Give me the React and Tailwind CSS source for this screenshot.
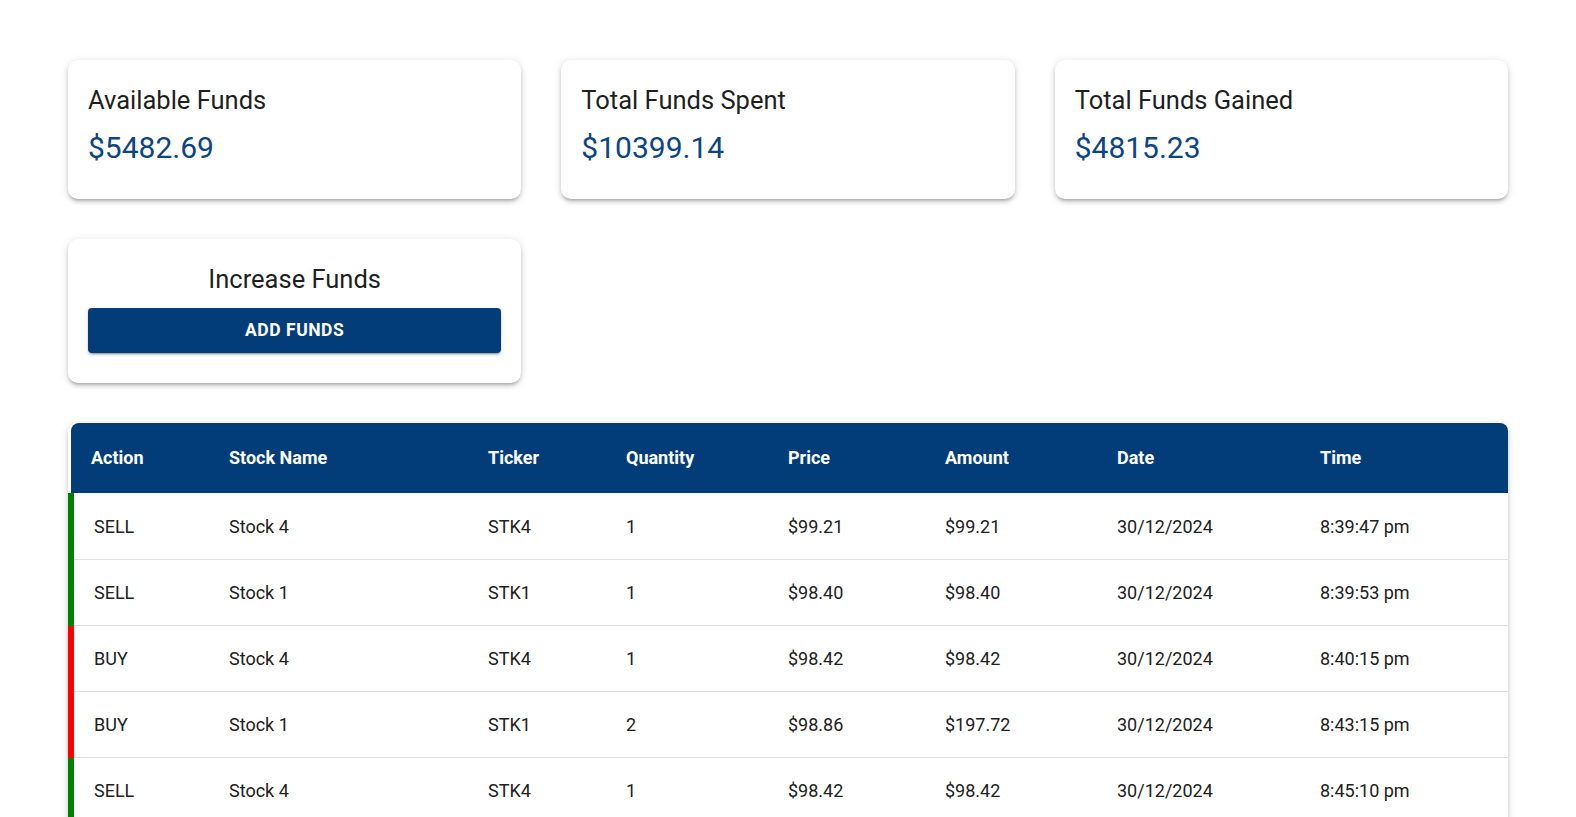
import React from 'react';

const PRIMARY = 'bg-[#023d7a]';

const summary = [
  { label: 'Available Funds', value: '$5482.69' },
  { label: 'Total Funds Spent', value: '$10399.14' },
  { label: 'Total Funds Gained', value: '$4815.23' },
];

const columns = [
  { title: 'Action', width: 'w-[138px]' },
  { title: 'Stock Name', width: 'w-[259px]' },
  { title: 'Ticker', width: 'w-[138px]' },
  { title: 'Quantity', width: 'w-[162px]' },
  { title: 'Price', width: 'w-[157px]' },
  { title: 'Amount', width: 'w-[172px]' },
  { title: 'Date', width: 'w-[203px]' },
  { title: 'Time', width: 'w-[208px]' },
];

const transactions = [
  { action: 'SELL', name: 'Stock 4', ticker: 'STK4', qty: 1, price: '$99.21', amount: '$99.21', date: '30/12/2024', time: '8:39:47 pm' },
  { action: 'SELL', name: 'Stock 1', ticker: 'STK1', qty: 1, price: '$98.40', amount: '$98.40', date: '30/12/2024', time: '8:39:53 pm' },
  { action: 'BUY', name: 'Stock 4', ticker: 'STK4', qty: 1, price: '$98.42', amount: '$98.42', date: '30/12/2024', time: '8:40:15 pm' },
  { action: 'BUY', name: 'Stock 1', ticker: 'STK1', qty: 2, price: '$98.86', amount: '$197.72', date: '30/12/2024', time: '8:43:15 pm' },
  { action: 'SELL', name: 'Stock 4', ticker: 'STK4', qty: 1, price: '$98.42', amount: '$98.42', date: '30/12/2024', time: '8:45:10 pm' },
];

const cardShadow =
  'shadow-[0_3px_3px_-2px_rgba(0,0,0,0.2),0_3px_4px_0_rgba(0,0,0,0.14),0_1px_8px_0_rgba(0,0,0,0.12)]';

const SummaryCard = ({ label, value }) => (
  <div className={`h-[139px] rounded-[10px] bg-white px-5 pt-6 ${cardShadow}`}>
    <div className="text-[25.5px] leading-8 text-[#1f1f1f]">{label}</div>
    <div className="mt-[14px] text-[30px] leading-9 text-[#0b4584]">{value}</div>
  </div>
);

export default function App() {
  return (
    <div className="min-h-screen bg-white font-['Roboto','Liberation_Sans',sans-serif]">
      {/* faint app bar shadow at the very top */}
      <div className="h-0 shadow-[0_1px_3px_rgba(0,0,0,0.08)]" />

      <div className="flex flex-col gap-10 px-[68px] pt-[60px] pb-10">
        <div className="grid grid-cols-3 gap-10">
          {summary.map((item) => (
            <SummaryCard key={item.label} {...item} />
          ))}
        </div>

        <div className="grid grid-cols-3 gap-10">
          <div className={`flex h-[144px] flex-col rounded-[10px] bg-white px-5 pt-6 ${cardShadow}`}>
            <div className="text-center text-[25.5px] leading-8 text-[#1f1f1f]">Increase Funds</div>
            <button
              className={`mt-[13px] h-[45px] w-full rounded ${PRIMARY} text-[17.5px] font-bold uppercase tracking-[0.03em] text-white shadow-[0_3px_1px_-2px_rgba(0,0,0,0.2),0_2px_2px_0_rgba(0,0,0,0.14),0_1px_5px_0_rgba(0,0,0,0.12)]`}
            >
              Add Funds
            </button>
          </div>
        </div>

        <div className={`rounded-lg bg-white ${cardShadow}`}>
          <table className="w-full table-fixed border-collapse text-left text-lg">
            <colgroup>
              {columns.map((col) => (
                <col key={col.title} className={col.width} />
              ))}
            </colgroup>
            <thead>
              <tr className={`h-[70px] ${PRIMARY}`}>
                {columns.map((col, index) => (
                  <th
                    key={col.title}
                    className={`px-5 font-bold text-white ${
                      index === 0 ? 'rounded-tl-lg' : index === columns.length - 1 ? 'rounded-tr-lg' : ''
                    }`}
                  >
                    {col.title}
                  </th>
                ))}
              </tr>
            </thead>
            <tbody>
              {transactions.map((t, rowIndex) => (
                <tr key={rowIndex} className="h-[66px] border-b border-[#e0e0e0] text-[#212121]">
                  <td
                    className={`border-l-[6px] px-5 pt-[2px] ${
                      t.action === 'BUY' ? 'border-l-[#ff0000]' : 'border-l-[#008000]'
                    }`}
                  >
                    {t.action}
                  </td>
                  <td className="px-5 pt-[2px]">{t.name}</td>
                  <td className="px-5 pt-[2px]">{t.ticker}</td>
                  <td className="px-5 pt-[2px]">{t.qty}</td>
                  <td className="px-5 pt-[2px]">{t.price}</td>
                  <td className="px-5 pt-[2px]">{t.amount}</td>
                  <td className="px-5 pt-[2px]">{t.date}</td>
                  <td className="px-5 pt-[2px]">{t.time}</td>
                </tr>
              ))}
            </tbody>
          </table>
        </div>
      </div>
    </div>
  );
}
